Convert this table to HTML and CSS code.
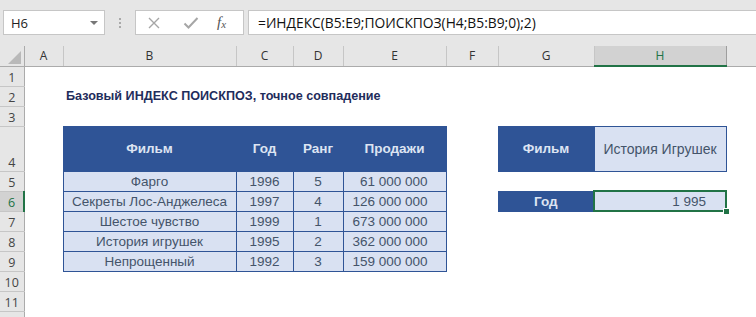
FILE: index.html
```html
<!DOCTYPE html>
<html lang="ru">
<head>
    <meta charset="UTF-8">
    <meta name="viewport" content="width=device-width, initial-scale=1.0">
    <title>ИНДЕКС ПОИСКПОЗ</title>
    <link rel="stylesheet" href="styles.css">
</head>
<body>
    <div class="toolbar">
        <div class="namebox">
            <span>H6</span>
            <span class="caret"></span>
        </div>
        <div class="grip"><i></i><i></i><i></i></div>
        <div class="fbuttons">
            <svg class="ico" width="14" height="14" viewBox="0 0 14 14">
                <path d="M2 2 L12 12 M12 2 L2 12" stroke="#a6a6a6" stroke-width="1.4" fill="none"/>
            </svg>
            <svg class="ico" width="16" height="14" viewBox="0 0 16 14">
                <path d="M1.5 7.5 L5.5 11.5 L14.5 2" stroke="#a6a6a6" stroke-width="2" fill="none"/>
            </svg>
            <span class="fx">f<sub>x</sub></span>
        </div>
        <div class="formula">=ИНДЕКС(B5:E9;ПОИСКПОЗ(H4;B5:B9;0);2)</div>
    </div>

    <table class="sheet">
        <colgroup>
            <col class="w-rh"><col class="w-a"><col class="w-b"><col class="w-c"><col class="w-d">
            <col class="w-e"><col class="w-f"><col class="w-g"><col class="w-h"><col class="w-i">
        </colgroup>
        <tr class="letters">
            <th class="corner"><svg width="13" height="13" viewBox="0 0 13 13"><polygon points="13,0 13,13 0,13" fill="#b9b9b9"/></svg></th>
            <th>A</th><th>B</th><th>C</th><th>D</th><th>E</th><th>F</th><th>G</th><th class="sel-col">H</th><th class="last"></th>
        </tr>
        <tr>
            <th class="rn">1</th><td></td><td></td><td></td><td></td><td></td><td></td><td></td><td></td><td></td>
        </tr>
        <tr>
            <th class="rn">2</th><td></td><td class="title" colspan="4">Базовый ИНДЕКС ПОИСКПОЗ, точное совпадение</td><td></td><td></td><td></td><td></td>
        </tr>
        <tr>
            <th class="rn">3</th><td></td><td></td><td></td><td></td><td></td><td></td><td></td><td></td><td></td>
        </tr>
        <tr class="tall">
            <th class="rn">4</th><td></td>
            <td class="hd">Фильм</td><td class="hd">Год</td><td class="hd">Ранг</td><td class="hd">Продажи</td>
            <td></td>
            <td class="hd">Фильм</td><td class="val lookup">История Игрушек</td>
            <td></td>
        </tr>
        <tr>
            <th class="rn">5</th><td></td>
            <td class="val">Фарго</td><td class="val">1996</td><td class="val">5</td><td class="val num">61 000 000</td>
            <td></td><td></td><td></td><td></td>
        </tr>
        <tr>
            <th class="rn sel-row">6</th><td></td>
            <td class="val">Секреты Лос-Анджелеса</td><td class="val">1997</td><td class="val">4</td><td class="val num">126 000 000</td>
            <td></td>
            <td class="hd">Год</td>
            <td class="active"><span class="result">1 995</span><span class="handle"></span></td>
            <td></td>
        </tr>
        <tr>
            <th class="rn">7</th><td></td>
            <td class="val">Шестое чувство</td><td class="val">1999</td><td class="val">1</td><td class="val num">673 000 000</td>
            <td></td><td></td><td></td><td></td>
        </tr>
        <tr>
            <th class="rn">8</th><td></td>
            <td class="val">История игрушек</td><td class="val">1995</td><td class="val">2</td><td class="val num">362 000 000</td>
            <td></td><td></td><td></td><td></td>
        </tr>
        <tr>
            <th class="rn">9</th><td></td>
            <td class="val">Непрощенный</td><td class="val">1992</td><td class="val">3</td><td class="val num">159 000 000</td>
            <td></td><td></td><td></td><td></td>
        </tr>
        <tr>
            <th class="rn">10</th><td></td><td></td><td></td><td></td><td></td><td></td><td></td><td></td><td></td>
        </tr>
        <tr>
            <th class="rn">11</th><td></td><td></td><td></td><td></td><td></td><td></td><td></td><td></td><td></td>
        </tr>
        <tr>
            <th class="rn"></th><td></td><td></td><td></td><td></td><td></td><td></td><td></td><td></td><td></td>
        </tr>
    </table>
</body>
</html>
```

FILE: styles.css
```css
* {
    box-sizing: border-box;
}
body {
    margin: 0;
    width: 756px;
    height: 317px;
    overflow: hidden;
    background: #fff;
    font-family: "Open Sans", "Noto Sans", sans-serif;
}

/* formula bar */
.toolbar {
    display: flex;
    align-items: flex-start;
    height: 46px;
    padding: 10px 0 0 3px;
    background: #e6e6e6;
}
.namebox {
    display: flex;
    align-items: center;
    justify-content: space-between;
    width: 102px;
    height: 25px;
    padding: 0 6px 0 7px;
    background: #fff;
    border: 1px solid #c6c6c6;
    font-size: 13px;
    color: #222;
}
.caret {
    width: 0;
    height: 0;
    border-left: 4px solid transparent;
    border-right: 4px solid transparent;
    border-top: 4px solid #777;
}
.grip {
    display: flex;
    flex-direction: column;
    align-items: center;
    gap: 2px;
    width: 30px;
    padding-top: 8px;
}
.grip i {
    width: 2px;
    height: 2px;
    background: #a9a9a9;
}
.fbuttons {
    display: flex;
    align-items: center;
    width: 109px;
    height: 25px;
    padding-left: 11px;
    background: #fff;
    border: 1px solid #c6c6c6;
}
.fbuttons .ico:first-child {
    margin-right: 22px;
}
.fbuttons .ico + .ico {
    margin-right: 18px;
}
.fx {
    font-family: "Liberation Serif", serif;
    font-style: italic;
    font-size: 15px;
    color: #555;
}
.fx sub {
    font-size: 11px;
    vertical-align: -1px;
}
.formula {
    flex: 1;
    height: 25px;
    margin-left: 4px;
    padding: 2px 0 0 9px;
    background: #fff;
    border: 1px solid #c6c6c6;
    border-right: none;
    font-size: 13.8px;
    color: #111;
    white-space: nowrap;
}

/* grid */
.sheet {
    table-layout: fixed;
    border-collapse: collapse;
    width: 786px;
    font-family: "Liberation Sans", Arial, sans-serif;
    font-size: 13.5px;
    color: #44546a;
}
.w-rh { width: 24px; }
.w-a { width: 39px; }
.w-b { width: 173px; }
.w-c { width: 57px; }
.w-d { width: 50px; }
.w-e { width: 103px; }
.w-f { width: 52px; }
.w-g { width: 96px; }
.w-h { width: 132px; }
.w-i { width: 60px; }

.sheet tr {
    height: 20px;
}
.sheet tr.tall {
    height: 45px;
}
.sheet td, .sheet th {
    padding: 0;
    white-space: nowrap;
    overflow: visible;
}
.letters {
    background: #e6e6e6;
}
.letters th {
    height: 20px;
    font-family: "Open Sans", sans-serif;
    font-weight: normal;
    font-size: 12px;
    color: #333;
    border-left: 1px solid #c6c6c6;
    border-bottom: 1px solid #ababab;
}
.letters th.corner {
    border-left: none;
    border-right: 1px solid #ababab;
    text-align: right;
    vertical-align: bottom;
    padding: 0 3px 2px 0;
    line-height: 0;
}
.letters th.sel-col {
    background: #d2d2d2;
    color: #217346;
    border-bottom: 2px solid #217346;
}
.letters th.last {
    border-left: 1px solid #9e9e9e;
}
.rn {
    background: #e6e6e6;
    font-family: "Open Sans", sans-serif;
    font-weight: normal;
    font-size: 12.5px;
    color: #444;
    vertical-align: bottom;
    border-bottom: 1px solid #c6c6c6;
    border-right: 1px solid #ababab;
}
.rn.sel-row {
    background: #d2d2d2;
    color: #217346;
    border-right: 2px solid #217346;
}

.sheet td.title {
    padding-left: 3px;
    font-size: 12.6px;
    font-weight: bold;
    color: #1f2d5c;
}
.hd {
    background: #2f5496;
    border: 1px solid #2f5496;
    color: #dde4f2;
    font-weight: bold;
    text-align: center;
}
.val {
    background: #d9e1f2;
    border: 1px solid #2f5496;
    text-align: center;
}
.sheet td.num {
    text-align: right;
    padding-right: 18px;
}
.lookup {
    font-size: 14px;
}
.sheet td.active {
    position: relative;
    background: #d9e1f2;
    border: 2px solid #217346;
    text-align: right;
    padding-right: 19px;
}
.handle {
    position: absolute;
    right: -4px;
    bottom: -4px;
    width: 6px;
    height: 6px;
    background: #217346;
    border: 1px solid #fff;
    border-right: none;
    border-bottom: none;
}
```
